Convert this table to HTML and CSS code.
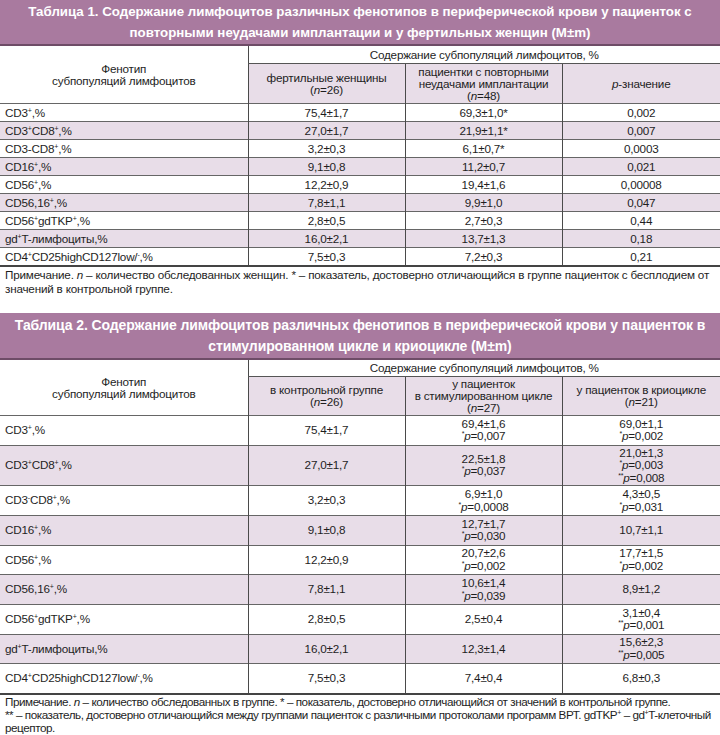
FILE: index.html
```html
<!DOCTYPE html>
<html lang="ru">
<head>
<meta charset="utf-8">
<title>Таблицы</title>
<link rel="stylesheet" href="styles.css">
</head>
<body>
<section class="block">
  <div class="caption cap1">Таблица 1. Содержание лимфоцитов различных фенотипов в периферической крови у пациенток с<br>повторными неудачами имплантации и у фертильных женщин (M±m)</div>
  <table class="data t1">
    <colgroup><col class="c1"><col class="c2"><col class="c3"><col class="c4"></colgroup>
    <thead>
      <tr class="h1"><th rowspan="2" class="ph">Фенотип<br>субпопуляций лимфоцитов</th><th colspan="3" class="grp">Содержание субпопуляций лимфоцитов, %</th></tr>
      <tr class="sub"><th>фертильные женщины<br>(<i>n</i>=26)</th><th>пациентки с повторными<br>неудачами имплантации<br>(<i>n</i>=48)</th><th><i>p</i>-значение</th></tr>
    </thead>
    <tbody>
      <tr><td>CD3<sup>+</sup>,%</td><td>75,4±1,7</td><td>69,3±1,0*</td><td>0,002</td></tr>
      <tr><td>CD3<sup>+</sup>CD8<sup>+</sup>,%</td><td>27,0±1,7</td><td>21,9±1,1*</td><td>0,007</td></tr>
      <tr><td>CD3-CD8<sup>+</sup>,%</td><td>3,2±0,3</td><td>6,1±0,7*</td><td>0,0003</td></tr>
      <tr><td>CD16<sup>+</sup>,%</td><td>9,1±0,8</td><td>11,2±0,7</td><td>0,021</td></tr>
      <tr><td>CD56<sup>+</sup>,%</td><td>12,2±0,9</td><td>19,4±1,6</td><td>0,00008</td></tr>
      <tr><td>CD56,16<sup>+</sup>,%</td><td>7,8±1,1</td><td>9,9±1,0</td><td>0,047</td></tr>
      <tr><td>CD56<sup>+</sup>gdTKP<sup>+</sup>,%</td><td>2,8±0,5</td><td>2,7±0,3</td><td>0,44</td></tr>
      <tr><td>gd<sup>+</sup>T-лимфоциты,%</td><td>16,0±2,1</td><td>13,7±1,3</td><td>0,18</td></tr>
      <tr><td>CD4<sup>+</sup>CD25highCD127low/<sup>-</sup>,%</td><td>7,5±0,3</td><td>7,2±0,3</td><td>0,21</td></tr>
    </tbody>
  </table>
  <p class="note">Примечание. <i>n</i> – количество обследованных женщин. * – показатель, достоверно отличающийся в группе пациенток с бесплодием от значений в контрольной группе.</p>
</section>

<section class="block second">
  <div class="caption cap2">Таблица 2. Содержание лимфоцитов различных фенотипов в периферической крови у пациенток в<br>стимулированном цикле и криоцикле (M±m)</div>
  <table class="data t2">
    <colgroup><col class="c1"><col class="c2"><col class="c3"><col class="c4"></colgroup>
    <thead>
      <tr class="h1"><th rowspan="2" class="ph">Фенотип<br>субпопуляций лимфоцитов</th><th colspan="3" class="grp">Содержание субпопуляций лимфоцитов, %</th></tr>
      <tr class="sub"><th>в контрольной группе<br>(<i>n</i>=26)</th><th>у пациенток<br>в стимулированном цикле<br>(<i>n</i>=27)</th><th>у пациенток в криоцикле<br>(<i>n</i>=21)</th></tr>
    </thead>
    <tbody>
      <tr><td>CD3<sup>+</sup>,%</td><td>75,4±1,7</td><td>69,4±1,6<br><sup>*</sup><i>p</i>=0,007</td><td>69,0±1,1<br><sup>*</sup><i>p</i>=0,002</td></tr>
      <tr><td>CD3<sup>+</sup>CD8<sup>+</sup>,%</td><td>27,0±1,7</td><td>22,5±1,8<br><sup>*</sup><i>p</i>=0,037</td><td>21,0±1,3<br><sup>*</sup><i>p</i>=0,003<br><sup>**</sup><i>p</i>=0,008</td></tr>
      <tr><td>CD3<sup>-</sup>CD8<sup>+</sup>,%</td><td>3,2±0,3</td><td>6,9±1,0<br><sup>*</sup><i>p</i>=0,0008</td><td>4,3±0,5<br><sup>*</sup><i>p</i>=0,031</td></tr>
      <tr><td>CD16<sup>+</sup>,%</td><td>9,1±0,8</td><td>12,7±1,7<br><sup>*</sup><i>p</i>=0,030</td><td>10,7±1,1</td></tr>
      <tr><td>CD56<sup>+</sup>,%</td><td>12,2±0,9</td><td>20,7±2,6<br><sup>*</sup><i>p</i>=0,002</td><td>17,7±1,5<br><sup>*</sup><i>p</i>=0,002</td></tr>
      <tr><td>CD56,16<sup>+</sup>,%</td><td>7,8±1,1</td><td>10,6±1,4<br><sup>*</sup><i>p</i>=0,039</td><td>8,9±1,2</td></tr>
      <tr><td>CD56<sup>+</sup>gdTKP<sup>+</sup>,%</td><td>2,8±0,5</td><td>2,5±0,4</td><td>3,1±0,4<br><sup>**</sup><i>p</i>=0,001</td></tr>
      <tr><td>gd<sup>+</sup>T-лимфоциты,%</td><td>16,0±2,1</td><td>12,3±1,4</td><td>15,6±2,3<br><sup>**</sup><i>p</i>=0,005</td></tr>
      <tr><td>CD4<sup>+</sup>CD25highCD127low/<sup>-</sup>,%</td><td>7,5±0,3</td><td>7,4±0,4</td><td>6,8±0,3</td></tr>
    </tbody>
  </table>
  <p class="note note2">Примечание. <i>n</i> – количество обследованных в группе. * – показатель, достоверно отличающийся от значений в контрольной группе.<br>** – показатель, достоверно отличающийся между группами пациенток с различными протоколами программ ВРТ. gdTKP<sup>+</sup> – gd<sup>+</sup>T-клеточный рецептор.</p>
</section>
</body>
</html>
```
FILE: styles.css
```css
html, body {
  margin: 0;
  padding: 0;
  background: #ffffff;
}
body {
  width: 720px;
  font-family: "Liberation Sans", Arial, sans-serif;
  color: #1e1e1e;
}
.caption {
  background: #a97a9f;
  color: #ffffff;
  font-weight: bold;
  text-align: center;
  border-bottom: 2px solid #6e4c67;
}
.cap1 {
  font-size: 13.3px;
  line-height: 21px;
  padding: 1px 0 1px;
}
.cap2 {
  font-size: 14px;
  line-height: 21px;
  padding: 2px 0 1px;
  letter-spacing: -0.1px;
}
.second {
  margin-top: 17px;
}
.data {
  width: 720px;
  border-collapse: collapse;
  table-layout: fixed;
  font-size: 11.7px;
  letter-spacing: -0.2px;
}
.c1 { width: 248px; }
.c2 { width: 157px; }
.c3 { width: 157px; }
.c4 { width: 158px; }
.data th {
  font-weight: normal;
  text-align: center;
  vertical-align: middle;
  padding: 1px 4px;
  line-height: 12px;
}
.data td {
  text-align: center;
  vertical-align: middle;
  padding: 2px 4px;
}
.data td:first-child {
  text-align: left;
  padding-left: 5px;
}
.data .grp {
  border-left: 1px solid #4a4a4a;
  border-bottom: 1px solid #555;
  height: 15px;
}
.t2 .grp {
  height: 14px;
}
.data .sub th {
  background: #e8dde8;
  border-left: 1px solid #4a4a4a;
  height: 37px;
}
.t2 .sub th {
  height: 35px;
}
.data thead {
  border-bottom: 1px solid #333;
}
.data tbody tr {
  border-top: 1px solid #666;
}
.data tbody tr:nth-child(even) {
  background: #e8dde8;
}
.data td + td {
  border-left: 1px solid #4a4a4a;
}
.data tbody {
  border-bottom: 2px solid #444;
}
.t1 td {
  line-height: 14px;
  padding-top: 1.5px;
  padding-bottom: 1.5px;
}
.t2 td {
  line-height: 12.5px;
  padding-top: 1px;
  padding-bottom: 1px;
}
.t2 tbody tr {
  height: 29.7px;
}
sup {
  font-size: 7px;
  line-height: 0;
  vertical-align: 4px;
}
.note {
  margin: 0;
  padding: 1px 4px 0 5px;
  font-size: 11.7px;
  letter-spacing: -0.2px;
  line-height: 14px;
}
.note2 {
  letter-spacing: -0.45px;
  padding-top: 0;
  line-height: 13.3px;
}
```
